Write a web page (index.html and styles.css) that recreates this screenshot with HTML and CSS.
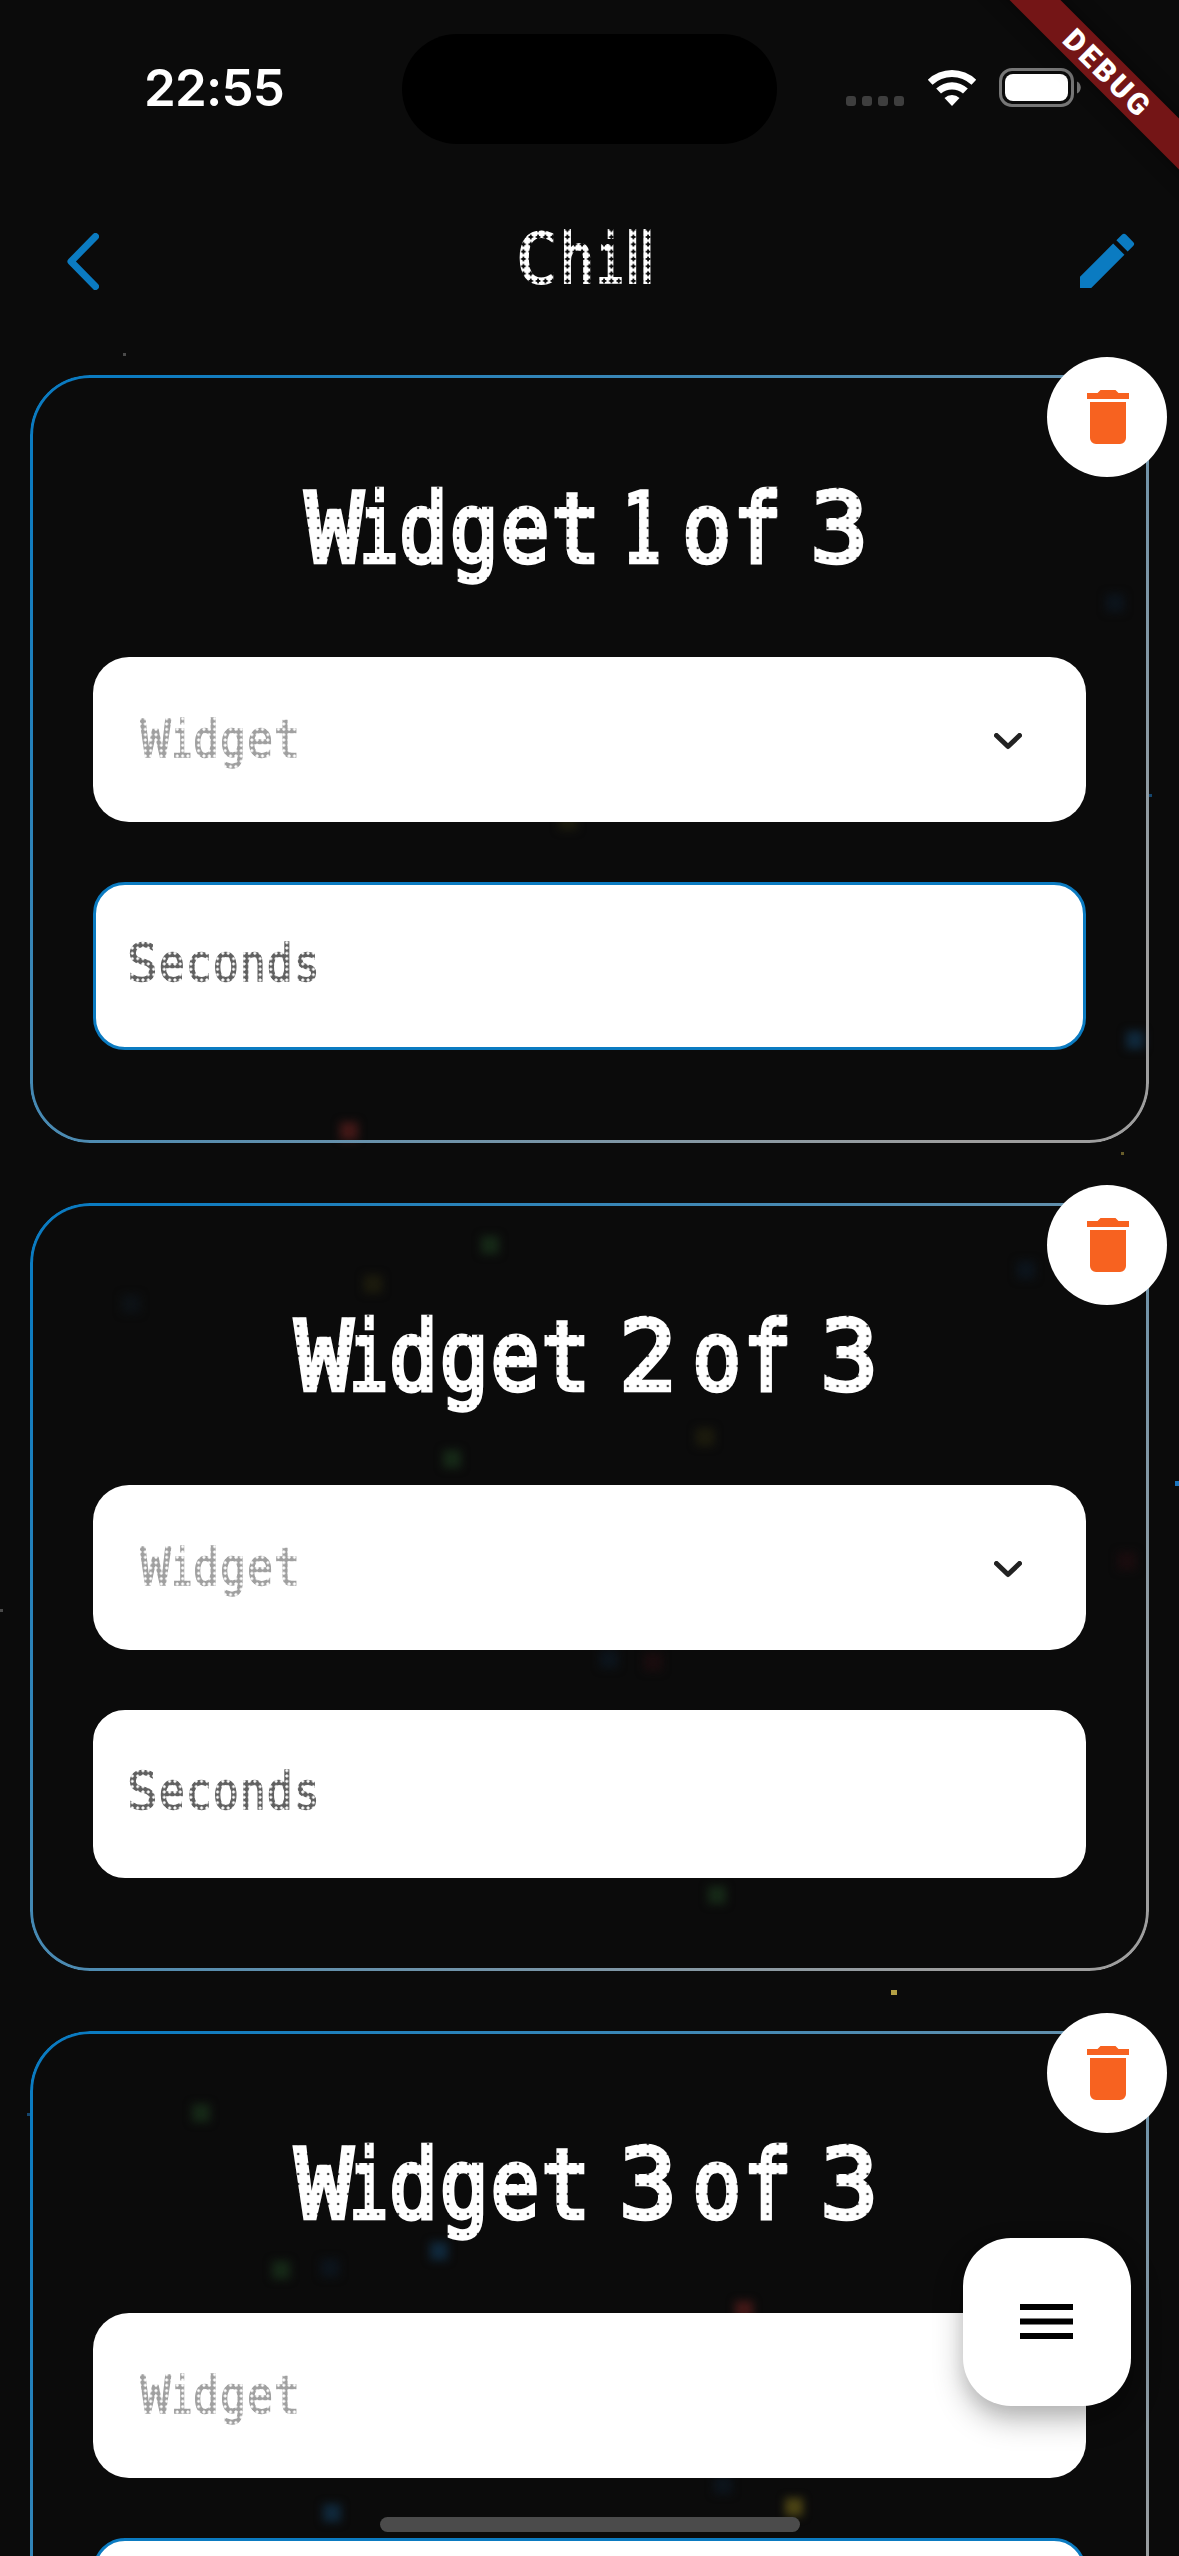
FILE: index.html
```html
<!DOCTYPE html>
<html lang="en">
<head>
<meta charset="utf-8">
<title>Chill</title>
<link rel="stylesheet" href="styles.css">
</head>
<body>
<div class="screen">
  <div class="particles" aria-hidden="true">
    <i class="red" style="left:340px;top:1122px"></i>
    <i class="blue" style="left:1126px;top:1031px"></i>
    <i class="navy" style="left:1106px;top:594px"></i>
    <i class="olive" style="left:559px;top:812px"></i>
    <i class="green" style="left:481px;top:1236px"></i>
    <i class="olive" style="left:364px;top:1275px"></i>
    <i class="faint" style="left:122px;top:1295px"></i>
    <i class="navy" style="left:1017px;top:1261px"></i>
    <i class="green" style="left:443px;top:1450px"></i>
    <i class="olive" style="left:696px;top:1428px"></i>
    <i class="maroon" style="left:1118px;top:1552px"></i>
    <i class="navy" style="left:600px;top:1650px"></i>
    <i class="maroon" style="left:644px;top:1653px"></i>
    <i class="green" style="left:708px;top:1886px"></i>
    <i class="green" style="left:192px;top:2104px"></i>
    <i class="green" style="left:272px;top:2261px"></i>
    <i class="navy" style="left:321px;top:2259px"></i>
    <i class="blue" style="left:430px;top:2242px"></i>
    <i class="red" style="left:735px;top:2301px"></i>
    <i class="blue" style="left:323px;top:2504px"></i>
    <i class="yellow" style="left:785px;top:2498px"></i>
    <i class="navy" style="left:714px;top:2476px"></i>
    <b class="c-blue" style="left:1149px;top:794px"></b>
    <b class="c-gold" style="left:1121px;top:1152px"></b>
    <b class="c-gold bright" style="left:891px;top:1990px"></b>
    <b class="c-blue bright" style="left:1175px;top:1481px"></b>
    <b class="c-blue" style="left:27px;top:2113px"></b>
    <b class="c-grey" style="left:0;top:1609px"></b>
    <b class="c-grey" style="left:123px;top:353px"></b>
  </div>

  <header class="status">
    <time class="clock">22:55</time>
    <div class="island"></div>
    <div class="indicators">
      <svg class="cell" viewBox="0 0 58 10"><rect width="10" height="10" rx="3"/><rect x="16" width="10" height="10" rx="3"/><rect x="32" width="10" height="10" rx="3"/><rect x="48" width="10" height="10" rx="3"/></svg>
      <svg class="wifi" viewBox="0 0 50 38"><path d="M.8 10.800a35 35 0 0 1 48.400 0l-4.700 5a28.500 28.500 0 0 0-39 0z"/><path d="M9.200 19.600a23 23 0 0 1 31.600 0l-4.800 5a16.500 16.500 0 0 0-22 0z"/><path d="M17.500 29a11 11 0 0 1 15 0l-7.500 8z"/></svg>
      <svg class="battery" viewBox="0 0 82 39"><rect x="1.500" y="1.500" width="72" height="36" rx="11.500" fill="none" stroke="#767676" stroke-width="3"/><rect x="6" y="6" width="63" height="27" rx="8" fill="#fff"/><path d="M78 13.500c5 2 5 10 0 12z" fill="#767676"/></svg>
    </div>
  </header>

  <nav class="bar">
    <svg class="back" viewBox="0 0 32 57"><path d="M28.500 3.500 4 28.500l24.500 25"/></svg>
    <h1 class="dots title"><span class="wide">C</span>h<span class="narrow">i</span><span class="thin">l</span><span class="thin">l</span></h1>
    <svg class="edit" viewBox="0 0 24 24"><path d="M3 17.250V21h3.750L17.810 9.940l-3.750-3.750L3 17.250zM20.710 7.040a1 1 0 0 0 0-1.410l-2.340-2.340a1 1 0 0 0-1.410 0l-1.830 1.830 3.750 3.750 1.830-1.830z"/></svg>
  </nav>

  <main class="list">
    <section class="card">
      <h2 class="dots heading"><span class="wide">W</span><span class="narrow">i</span>dget <span class="narrow">1</span> of <span class="wide">3</span></h2>
      <div class="select"><span class="dots hint"><span class="wide">W</span><span class="narrow">i</span>dget</span><svg class="chev" viewBox="0 0 28 17"><path d="M2.500 2.500 14 13.500l11.500-11"/></svg></div>
      <div class="input active"><span class="dots label"><span class="wide">S</span>econds</span></div>
      <button class="remove" aria-label="Delete"><svg viewBox="0 0 24 24"><path d="M6 19a2 2 0 0 0 2 2h8a2 2 0 0 0 2-2V7H6v12zM19 4h-3.500l-1-1h-5l-1 1H5v2h14V4z"/></svg></button>
    </section>
    <section class="card">
      <h2 class="dots heading"><span class="wide">W</span><span class="narrow">i</span>dget <span class="wide">2</span> of <span class="wide">3</span></h2>
      <div class="select"><span class="dots hint"><span class="wide">W</span><span class="narrow">i</span>dget</span><svg class="chev" viewBox="0 0 28 17"><path d="M2.500 2.500 14 13.500l11.500-11"/></svg></div>
      <div class="input"><span class="dots label"><span class="wide">S</span>econds</span></div>
      <button class="remove" aria-label="Delete"><svg viewBox="0 0 24 24"><path d="M6 19a2 2 0 0 0 2 2h8a2 2 0 0 0 2-2V7H6v12zM19 4h-3.500l-1-1h-5l-1 1H5v2h14V4z"/></svg></button>
    </section>
    <section class="card">
      <h2 class="dots heading"><span class="wide">W</span><span class="narrow">i</span>dget <span class="wide">3</span> of <span class="wide">3</span></h2>
      <div class="select"><span class="dots hint"><span class="wide">W</span><span class="narrow">i</span>dget</span></div>
      <div class="input active"></div>
      <button class="remove" aria-label="Delete"><svg viewBox="0 0 24 24"><path d="M6 19a2 2 0 0 0 2 2h8a2 2 0 0 0 2-2V7H6v12zM19 4h-3.500l-1-1h-5l-1 1H5v2h14V4z"/></svg></button>
    </section>
  </main>

  <button class="fab" aria-label="Menu"><svg viewBox="0 0 53 35"><path d="M0 0h53v6H0zM0 14.500h53v6H0zM0 29h53v6H0z"/></svg></button>
  <div class="home"></div>
  <div class="banner">DEBUG</div>
</div>
</body>
</html>
```
FILE: styles.css
```css
* { box-sizing: border-box; }
body { margin: 0; background: #0b0b0b; }
button { border: 0; padding: 0; }
svg { display: block; }

.screen {
  position: relative;
  width: 1179px;
  height: 2556px;
  overflow: hidden;
  background: #0b0b0b;
  color: #fff;
  font-family: "DejaVu Sans Mono", monospace;
}

.particles i, .particles b { position: absolute; display: block; }
.particles i { width: 18px; height: 18px; filter: blur(4px); }
.particles b { width: 3px; height: 3px; opacity: .5; }
.particles .bright { width: 6px; height: 5px; opacity: .9; }
.red { background: #421817; }
.maroon { background: #1a0c0e; }
.blue { background: #10283b; }
.navy { background: #0c141c; }
.green { background: #162817; }
.olive { background: #1c1b0d; }
.yellow { background: #4b4314; }
.faint { background: #0d1216; }
.c-blue { background: #1d7fd0; }
.c-gold { background: #c6b04a; }
.c-grey { background: #8a8a8a; }

/* status bar */
.status {
  height: 178px;
  padding: 34px 98px 0 144px;
  display: flex;
  align-items: flex-start;
  justify-content: space-between;
  position: relative;
}
.clock {
  width: 258px;
  margin-top: 23px;
  font: 600 51px/62px Inter, sans-serif;
  letter-spacing: -.8px;
}
.island { width: 375px; height: 110px; border-radius: 55px; background: #000; }
.indicators { width: 304px; display: flex; justify-content: flex-end; padding-top: 34px; }
.cell { width: 58px; height: 10px; margin: 28px 23px 0 0; fill: #3e3e3e; }
.wifi { width: 50px; height: 38px; margin: 1px 22px 0 0; fill: #fff; }
.battery { width: 82px; height: 39px; }

/* navigation bar */
.bar {
  height: 166px;
  padding: 0 36px 0 67px;
  display: grid;
  grid-template-columns: 72px 1fr 72px;
  align-items: center;
  position: relative;
}
.back { width: 32px; height: 57px; fill: none; stroke: #0b7bc1; stroke-width: 7; stroke-linecap: round; stroke-linejoin: round; }
.edit { width: 72px; height: 72px; fill: #0b7bc1; }

/* dot-matrix lettering: the type is screened through a grid of round dots */
.dots {
  --p: 5.333px;
  --r: 2.750px;
  display: block;
  margin: 0;
  white-space: pre;
  font-weight: 400;
  letter-spacing: .020em;
  transform: scaleX(.85);
  transform-origin: 0 50%;
  -webkit-mask: radial-gradient(ellipse calc(var(--r) / .85) var(--r) at center, #000 85%, transparent 100%) 0 0 / calc(var(--p) / .85) var(--p);
}
.dots span { display: inline-block; letter-spacing: 0; transform-origin: 0 50%; }
.wide { width: .735em; transform: scaleX(1.18); }
.narrow { width: .49em; transform: scaleX(.8); }
.thin { width: .245em; font-family: "DejaVu Sans", sans-serif; }
.title { --p: 7.333px; --r: 3.800px; justify-self: center; margin: -5px 40px 0 0; font-size: 69px; line-height: 88px; transform-origin: 50% 50%; -webkit-text-stroke: 2px #fff; }
.heading {
  --p: 10px;
  --r: 6.600px;
  height: 120px;
  margin: 0 -52px 69px -68px;
  font-size: 96px;
  line-height: 122px;
  word-spacing: -.375em;
  text-align: center;
  transform-origin: 50% 50%;
  -webkit-text-stroke: 4.500px #fff;
}
.hint, .label { font-size: 51px; line-height: 64px; -webkit-text-stroke: 1.300px currentColor; }
.hint { color: #a0a0a0; margin-left: 1px; }
.label { color: #606060; margin-top: -4px; }

/* widget cards */
.list { padding: 31px 30px 0; display: flex; flex-direction: column; gap: 60px; position: relative; }
.card {
  position: relative;
  height: 768px;
  flex: none;
  padding: 93px 63px 0;
}
.card::before {
  content: "";
  position: absolute;
  inset: 0;
  border-radius: 60px;
  padding: 3px;
  background: linear-gradient(135deg, #0b7bc1 5%, #9e9e9e 90%);
  -webkit-mask: linear-gradient(#000 0 0) content-box, linear-gradient(#000 0 0);
  -webkit-mask-composite: xor;
  mask-composite: exclude;
}
.select {
  height: 165px;
  padding: 0 64px 0 46px;
  display: flex;
  align-items: center;
  justify-content: space-between;
  background: #fff;
  border-radius: 36px;
  position: relative;
}
.chev { width: 28px; height: 17px; margin-top: 3px; fill: none; stroke: #222; stroke-width: 5; stroke-linecap: round; stroke-linejoin: round; }
.input {
  height: 168px;
  margin-top: 60px;
  padding: 0 31px;
  display: flex;
  align-items: center;
  background: #fff;
  border: 3px solid #fff;
  border-radius: 32px;
  position: relative;
}
.active { border-color: #0b7bc1; }
.remove {
  position: absolute;
  right: -18px;
  top: -18px;
  width: 120px;
  height: 120px;
  border-radius: 50%;
  background: #fff;
  display: grid;
  place-items: center;
}
.remove svg { width: 72px; height: 72px; fill: #f76220; margin-left: 2px; }

/* overlays */
.fab {
  position: absolute;
  left: 963px;
  top: 2238px;
  width: 168px;
  height: 168px;
  border-radius: 48px;
  background: #fff;
  display: grid;
  place-items: center;
  box-shadow: 0 14px 30px rgba(0, 0, 0, .26), 0 8px 16px rgba(0, 0, 0, .08);
}
.fab svg { width: 53px; height: 35px; margin: -1px 2px 0 0; fill: #000; }
.home { position: absolute; left: 380px; top: 2517px; width: 420px; height: 15px; border-radius: 8px; background: #4b4b4b; }
.banner {
  position: absolute;
  left: 907px;
  top: 54px;
  width: 400px;
  height: 36px;
  padding-left: 3px;
  transform: rotate(45deg);
  background: #741516;
  box-shadow: 0 0 18px rgba(0, 0, 0, .5);
  font: 900 30px/37px Roboto, sans-serif;
  letter-spacing: 3px;
  text-align: center;
}
```
